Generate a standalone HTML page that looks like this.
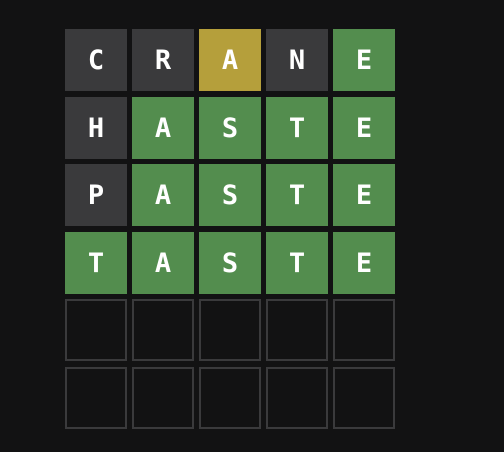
<!DOCTYPE html>
<html><head><style>
body{margin:0;width:504px;height:452px;background:#121213;overflow:hidden;font-family:"DejaVu Sans Mono",monospace}
.t{position:absolute;width:62px;height:62px;box-sizing:border-box;color:#fff;font-weight:bold;font-size:27px;display:flex;align-items:center;justify-content:center}
.d{background:#3a3a3c}.g{background:#538d4e}.y{background:#b59f3b}.e{border:2px solid #3a3a3c}
</style></head><body>
<script>
const rows=[["CRANE","ddydg"],["HASTE","dgggg"],["PASTE","dgggg"],["TASTE","ggggg"],["     ","eeeee"],["     ","eeeee"]];
const ys=[29,97,164,232,299,367],xs=[65,132,199,266,333];
let h="";rows.forEach((r,i)=>{for(let j=0;j<5;j++)h+=`<div class="t ${r[1][j]}" style="left:${xs[j]}px;top:${ys[i]}px">${r[0][j].trim()}</div>`});
document.write(h);
</script>
</body></html>
